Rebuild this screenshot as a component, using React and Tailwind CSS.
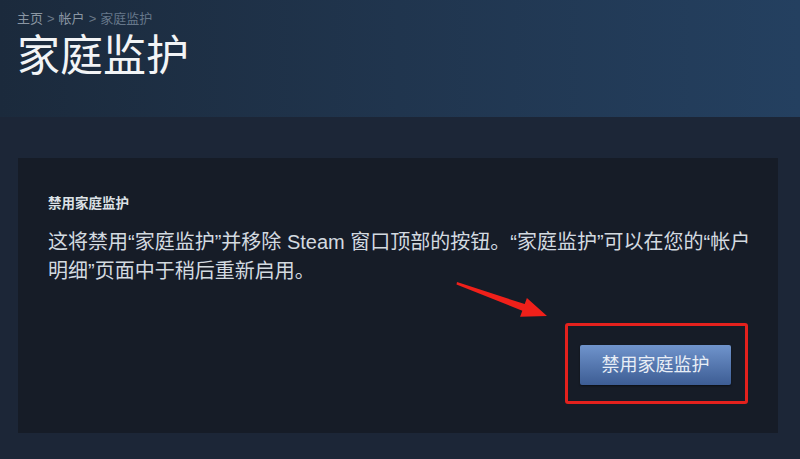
export default function App() {
  const cjk = { fontFamily: '"Liberation Sans", "Noto Sans CJK SC", sans-serif' };
  return (
    <div className="relative w-[800px] h-[459px] overflow-hidden bg-[#1c2637]" style={cjk}>
      <div className="h-[117px] bg-gradient-to-r from-[#1b2a3c] via-[#20354e] to-[#244060] px-[17px] pt-[10px]">
        <div className="flex items-center gap-[4px] text-[13px] leading-[18px] text-[#8a96a3]">
          <span>主页</span>
          <span className="text-[#6a7888]">&gt;</span>
          <span>帐户</span>
          <span className="text-[#6a7888]">&gt;</span>
          <span className="text-[#66778a]">家庭监护</span>
        </div>
        <h1 className="mt-[7px] text-[43px] leading-[42px] text-[#f2f4f6] font-normal">家庭监护</h1>
      </div>
      <div className="ml-[18px] mr-[22px] mt-[41px] h-[275px] bg-[#161c27] pl-[30px] pr-[30px] pt-[36px] pb-[28px] flex flex-col">
        <h2 className="text-[13.5px] leading-[20px] font-bold text-[#dce1e6]">禁用家庭监护</h2>
        <p className="mt-[14px] text-[20px] leading-[29px] text-[#d3dae0] whitespace-nowrap">
          这将禁用“家庭监护”并移除 Steam 窗口顶部的按钮。“家庭监护”可以在您的“帐户<br />
          明细”页面中于稍后重新启用。
        </p>
        <div className="mt-[37px] flex justify-end">
          <div className="border-[3px] border-[#e3211d] rounded-[3px] pl-[12px] pr-[14px] pt-[19px] pb-[16px]">
            <button className="w-[151px] h-[40px] rounded-[2px] bg-gradient-to-b from-[#7094cc] to-[#3d5d94] text-[18px] text-[#e8eef6] shadow-[0_1px_2px_rgba(0,0,0,0.5)]">
              禁用家庭监护
            </button>
          </div>
        </div>
      </div>
      <svg className="absolute left-0 top-0 pointer-events-none" width="800" height="459" viewBox="0 0 800 459">
        <polygon
          points="457,282 524.7,304.1 526.9,298 547,316 520.1,316.8 522.3,310.7 456.5,284.5"
          fill="#f0201a"
        />
      </svg>
    </div>
  );
}
